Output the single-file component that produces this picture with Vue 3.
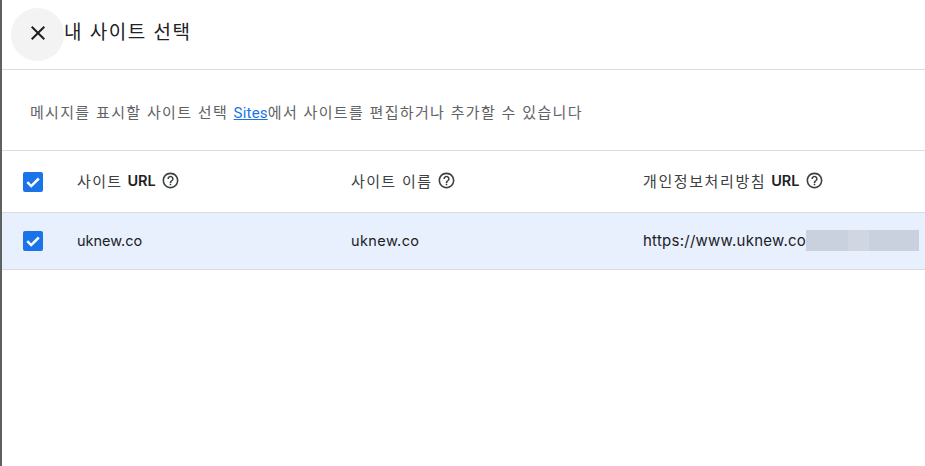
<template>
  <div class="page">
    <header class="dialog-head">
      <button class="close-btn" aria-label="닫기">
        <svg width="24" height="24" viewBox="0 0 24 24"><path d="M19 6.41 17.59 5 12 10.59 6.41 5 5 6.41 10.59 12 5 17.59 6.41 19 12 13.41 17.59 19 19 17.59 13.41 12z" fill="#1f1f1f"/></svg>
      </button>
      <h1 class="title">내 사이트 선택</h1>
    </header>

    <p class="desc">메시지를 표시할 사이트 선택 <a class="link">Sites</a>에서 사이트를 편집하거나 추가할 수 있습니다</p>

    <div class="row head-row">
      <div class="cell-check">
        <span class="checkbox"><svg width="20" height="20" viewBox="0 0 20 20"><path d="M4.3 10.2 8.2 14.1 15.8 6.5" fill="none" stroke="#fff" stroke-width="2.5"/></svg></span>
      </div>
      <div v-for="c in columns" :key="c.label" class="cell" :class="c.cls">
        <span class="head-label">{{ c.label }}</span>
        <b v-if="c.suffix" class="head-suffix">{{ c.suffix }}</b>
        <svg class="help" width="19" height="19" viewBox="0 0 24 24"><path d="M11 18h2v-2h-2v2zm1-16C6.48 2 2 6.48 2 12s4.48 10 10 10 10-4.48 10-10S17.52 2 12 2zm0 18c-4.41 0-8-3.59-8-8s3.59-8 8-8 8 3.59 8 8-3.59 8-8 8zm0-14c-2.21 0-4 1.79-4 4h2c0-1.1.9-2 2-2s2 .9 2 2c0 2-3 1.75-3 5h2c0-2.25 3-2.5 3-5 0-2.21-1.79-4-4-4z" fill="#3c4043"/></svg>
      </div>
    </div>

    <div class="row data-row">
      <div class="cell-check">
        <span class="checkbox"><svg width="20" height="20" viewBox="0 0 20 20"><path d="M4.3 10.2 8.2 14.1 15.8 6.5" fill="none" stroke="#fff" stroke-width="2.5"/></svg></span>
      </div>
      <div class="cell col-url">uknew.co</div>
      <div class="cell col-name">uknew.co</div>
      <div class="cell col-policy">
        <span class="url-text">https://www.uknew.co</span>
        <span class="redact"><i class="a"></i><i class="b"></i><i class="c"></i></span>
      </div>
    </div>
  </div>
</template>

<script setup>
const columns = [
  { label: '사이트', suffix: 'URL', cls: 'col-url' },
  { label: '사이트 이름', cls: 'col-name' },
  { label: '개인정보처리방침', suffix: 'URL', cls: 'col-policy' }
]
</script>

<style scoped>
.page {
  width: 925px;
  height: 466px;
  box-sizing: border-box;
  border-left: 2px solid #5f6061;
  background: #fff;
  color: #202124;
  font-family: Inter, "Noto Sans CJK KR", sans-serif;
  overflow: hidden;
}

.dialog-head {
  display: flex;
  align-items: flex-start;
  padding: 8px 0 0 9px;
  height: 61px;
  border-bottom: 1px solid #dadce0;
}

.close-btn {
  width: 53px;
  height: 53px;
  padding: 0 0 3px;
  border: none;
  border-radius: 50%;
  background: #f3f3f3;
  display: flex;
  align-items: center;
  justify-content: center;
  flex-shrink: 0;
}

.title {
  margin: 12px 0 0 0;
  font-size: 19px;
  line-height: 26px;
  font-weight: 400;
  letter-spacing: 1.5px;
}

.desc {
  margin: 0;
  height: 81px;
  box-sizing: border-box;
  padding: 33px 0 0 28px;
  border-bottom: 1px solid #dadce0;
  font-size: 15px;
  line-height: 20px;
  letter-spacing: 1.32px;
  color: #5f6368;
}

.link {
  color: #1a73e8;
  text-decoration: underline;
  font-family: Roboto, sans-serif;
  font-size: 15px;
  letter-spacing: 0.2px;
}

.row {
  display: flex;
  align-items: center;
  font-size: 14.5px;
  border-bottom: 1px solid #dadce0;
  box-sizing: border-box;
}

.head-row {
  height: 62px;
}

.head-row .cell {
  padding-bottom: 3px;
}

.head-label {
  font-size: 15px;
  letter-spacing: 1.35px;
  color: #3c4043;
}

.head-row .col-policy .head-label {
  letter-spacing: 1.6px;
}

.head-suffix {
  font-weight: 600;
  font-size: 14.5px;
  margin-left: 5px;
}

.data-row {
  height: 57px;
  background: #e8f0fe;
}

.data-row .cell {
  padding-bottom: 2px;
}

.data-row .col-name {
  letter-spacing: 0.4px;
}

.url-text {
  font-size: 15px;
  letter-spacing: 0.25px;
}

.cell-check {
  width: 75px;
  padding-left: 21px;
  box-sizing: border-box;
  flex-shrink: 0;
  display: flex;
}

.checkbox {
  width: 20px;
  height: 20px;
  border-radius: 2px;
  background: #1a73e8;
  display: block;
}

.checkbox svg {
  display: block;
}

.cell {
  display: flex;
  align-items: center;
  white-space: nowrap;
}

.col-url { width: 274px; }
.col-name { width: 292px; }
.col-policy { flex: 1; }

.help {
  flex-shrink: 0;
  margin-left: 5px;
}

.redact {
  display: flex;
  width: 113px;
  height: 21px;
}

.redact i {
  display: block;
  background: #c9d0de;
}

.redact .a { width: 42px; }
.redact .b { width: 21px; background: #d0d6e2; }
.redact .c { width: 50px; }
</style>
